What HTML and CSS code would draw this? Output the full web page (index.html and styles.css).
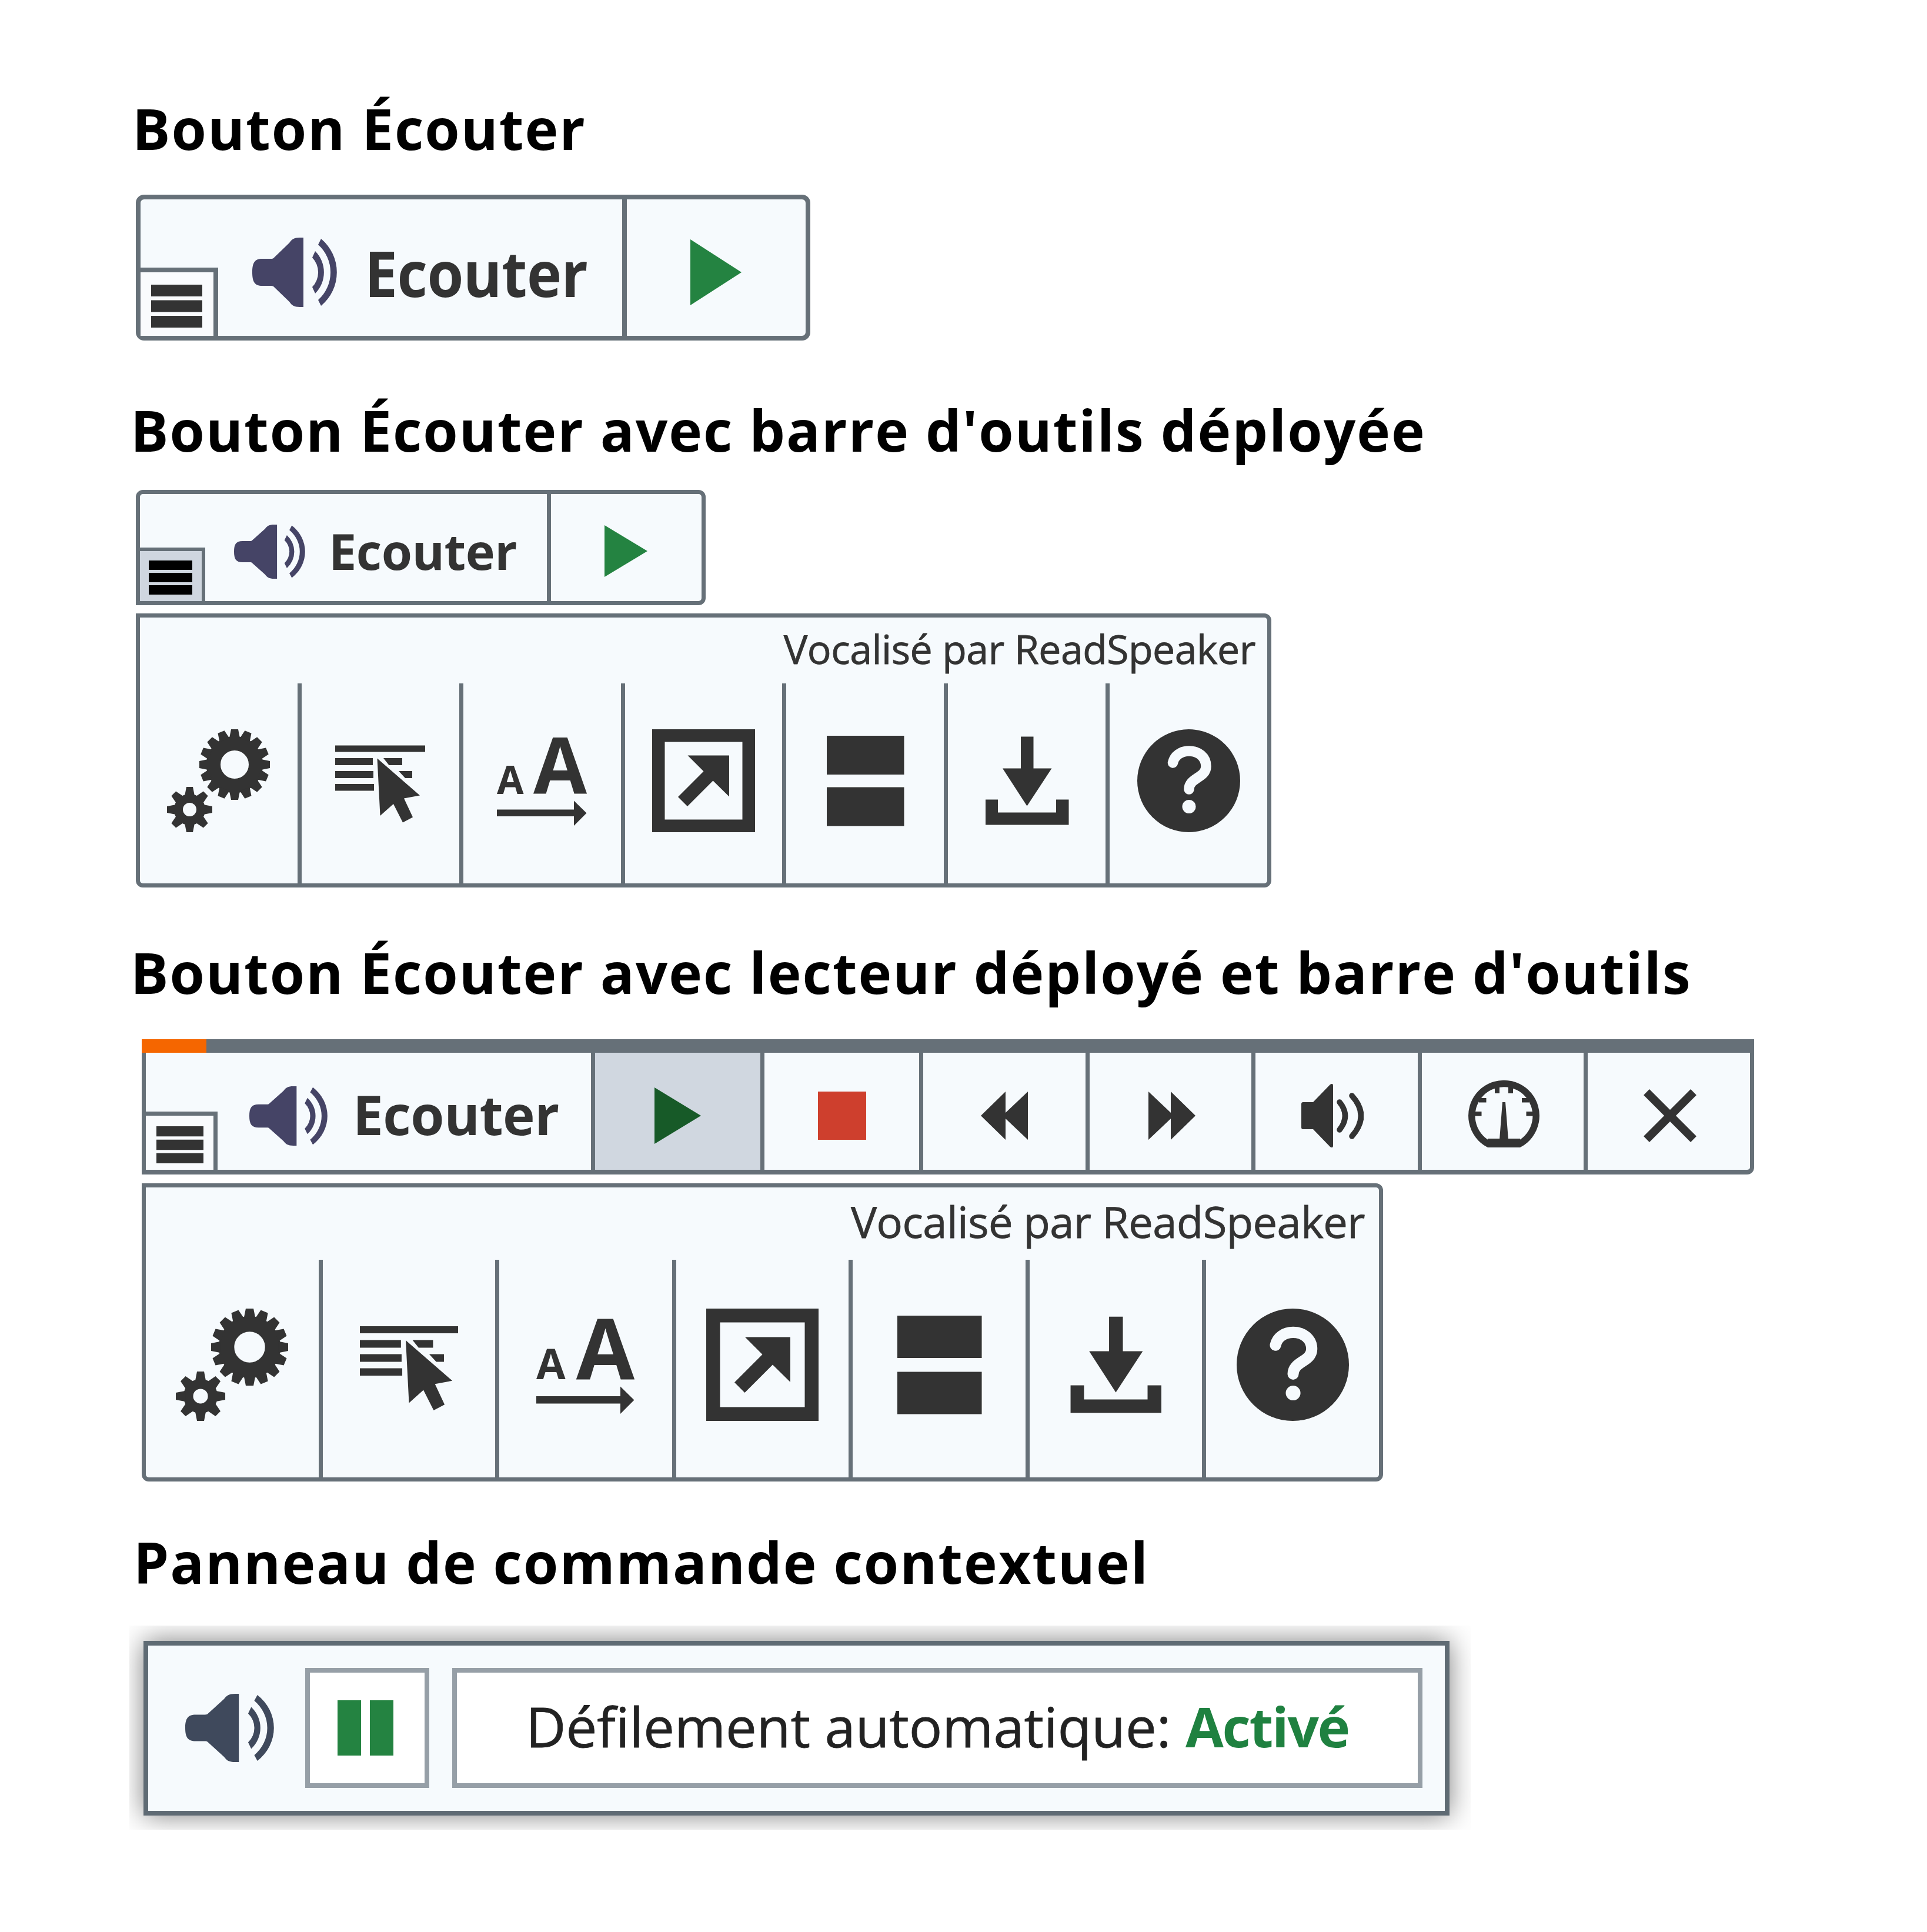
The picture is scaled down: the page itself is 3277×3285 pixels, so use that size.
FILE: index.html
```
<!DOCTYPE html>
<html lang="fr">
<head>
  <meta charset="UTF-8">
  <title>Boutons ReadSpeaker</title>
  <link rel="stylesheet" href="styles.css">
</head>
<body>

<!-- icons -->
<svg class="sprite" width="0" height="0">
  <symbol id="speaker" viewBox="0 0 144 118" preserveAspectRatio="none">
    <path d="M87 0H81C71 0 67 3 63 9L36 35C35 36 33 36 30 36H17C4 36 0 43 0 59S4 82 17 82H30C33 82 35 82 36 83L63 109C67 115 71 118 81 118H87Z"/>
    <path d="M107 23A51 51 0 0 1 107 95L102 84A36 36 0 0 0 102 34Z"/>
    <path d="M117 2A74 74 0 0 1 117 116L112 106A63 63 0 0 0 112 12Z"/>
  </symbol>
  <symbol id="menu" viewBox="0 0 86 73" preserveAspectRatio="none">
    <path d="M0 0H86V20H0ZM0 26.5H86V46.5H0ZM0 53H86V73H0Z"/>
  </symbol>
  <symbol id="play" viewBox="0 0 87 112" preserveAspectRatio="none">
    <path d="M0 0L87 56L0 112Z"/>
  </symbol>
  <symbol id="rewind" viewBox="0 0 80 82">
    <path d="M0 41L42 0V36L80 0V82L42 46V82Z"/>
  </symbol>
  <symbol id="volume" viewBox="0 0 106 108">
    <path d="M3 31H20L49 1Q54 -2 54 3V105Q54 110 49 107L20 77H3Q0 77 0 74V34Q0 31 3 31Z"/>
    <path class="line" stroke-width="9.5" stroke-linecap="round" d="M65 31Q84 54 65 78M86 20Q117 54 86 89"/>
  </symbol>
  <symbol id="gauge" viewBox="0 0 121 115">
    <path class="line" stroke-width="11.5" d="M34 109A54.7 54.7 0 1 1 87 109Z"/>
    <path d="M33 100H88V115H33ZM45 8H53V23H45ZM68 8H76V23H68ZM18 31H30.5V38.5H18ZM91 31H103V38.5H91ZM8 54H22.5V61.5H8ZM98.5 54H113V61.5H98.5ZM58 38H63L68 102H53Z"/>
  </symbol>
  <symbol id="close" viewBox="0 0 90 90">
    <path class="line" stroke-width="14" d="M5 5L85 85M85 5L5 85"/>
  </symbol>

  <path id="tooth" d="M-6 -60H6L9 -45H-9ZM-6 60H6L9 45H-9Z"/>
  <path id="tooth-s" d="M-5.5 -38.5H5.5L8.5 -23H-8.5ZM-5.5 38.5H5.5L8.5 23H-8.5Z"/>
  <symbol id="gears" viewBox="0 0 175 175">
    <g transform="translate(115 60)">
      <circle class="line" stroke-width="24" r="36"/>
      <use href="#tooth"/>
      <use href="#tooth" transform="rotate(22.5)"/>
      <use href="#tooth" transform="rotate(45)"/>
      <use href="#tooth" transform="rotate(67.5)"/>
      <use href="#tooth" transform="rotate(90)"/>
      <use href="#tooth" transform="rotate(112.5)"/>
      <use href="#tooth" transform="rotate(135)"/>
      <use href="#tooth" transform="rotate(157.5)"/>
    </g>
    <g transform="translate(38.5 136.5)">
      <circle class="line" stroke-width="15" r="19"/>
      <use href="#tooth-s"/>
      <use href="#tooth-s" transform="rotate(45)"/>
      <use href="#tooth-s" transform="rotate(90)"/>
      <use href="#tooth-s" transform="rotate(135)"/>
    </g>
  </symbol>
  <symbol id="select" viewBox="0 0 175 175">
    <path d="M11 27.5H164V38.5H11ZM11 49H75V61H11ZM93 49H125V61H102.5ZM11 71H76V83H11ZM119 71H142V83H130ZM11 93H77V104.5H11Z"/>
    <path d="M82.5 49.5L155 112.5L128 117.5L143 149.5L126 158.5L110 127L87.5 147Z"/>
  </symbol>
  <symbol id="textsize" viewBox="0 0 175 175">
    <text x="11" y="110" font-size="66">A</text>
    <text x="73" y="110" font-size="132">A</text>
    <path d="M11 136.5H142V121.5L163.5 142.5L142 164V148H11Z"/>
  </symbol>
  <symbol id="enlarge" viewBox="0 0 175 175">
    <path class="line" stroke-width="21.5" d="M10.75 10.75H164.25V164.25H10.75Z"/>
    <path d="M60.5 44.5H131V114.5L103.5 87.5L60 131L44 115L87.5 71.5Z"/>
  </symbol>
  <symbol id="mask" viewBox="0 0 175 175">
    <path d="M22 11H153.5V77H22ZM22 98.5H153.5V164.5H22Z"/>
  </symbol>
  <symbol id="download" viewBox="0 0 175 175">
    <path d="M77 12.5H98.5V66.5H129.5L87.5 130.5L46 66.5H77ZM17 119.5H38V141.5H137V119.5H158.5V162.5H17Z"/>
  </symbol>
  <symbol id="help" viewBox="0 0 175 175">
    <circle cx="87.5" cy="87.5" r="87.5"/>
    <path class="mark" d="M60.5 57C63 45 74 37 88 37C104 37 117 47 117 63C117 83 88 82 88 102"/>
    <circle class="dot" cx="88" cy="131.5" r="11.5"/>
  </symbol>
</svg>

<h2>Bouton Écouter</h2>
<div class="player large">
  <div class="listen">
    <svg class="speaker"><use href="#speaker"/></svg>
    <span class="label">Ecouter</span>
    <div class="menu"><svg><use href="#menu"/></svg></div>
  </div>
  <div class="btn play"><svg><use href="#play"/></svg></div>
</div>

<h2 class="second">Bouton Écouter avec barre d'outils déployée</h2>
<div class="player small">
  <div class="listen">
    <svg class="speaker"><use href="#speaker"/></svg>
    <span class="label">Ecouter</span>
    <div class="menu active"><svg><use href="#menu"/></svg></div>
  </div>
  <div class="btn play"><svg><use href="#play"/></svg></div>
</div>
<div class="toolbar">
  <div class="powered"><span>Vocalisé par ReadSpeaker</span></div>
  <div class="tools">
    <div class="tool"><svg><use href="#gears"/></svg></div>
    <div class="tool"><svg><use href="#select"/></svg></div>
    <div class="tool"><svg><use href="#textsize"/></svg></div>
    <div class="tool"><svg><use href="#enlarge"/></svg></div>
    <div class="tool"><svg><use href="#mask"/></svg></div>
    <div class="tool"><svg><use href="#download"/></svg></div>
    <div class="tool"><svg><use href="#help"/></svg></div>
  </div>
</div>

<h2 class="third">Bouton Écouter avec lecteur déployé et barre d'outils</h2>
<div class="player wide">
  <div class="progress"><div class="bar"></div></div>
  <div class="controls">
    <div class="listen">
      <svg class="speaker"><use href="#speaker"/></svg>
      <span class="label">Ecouter</span>
      <div class="menu"><svg><use href="#menu"/></svg></div>
    </div>
    <div class="btn play active"><svg><use href="#play"/></svg></div>
    <div class="btn stop"><div class="square"></div></div>
    <div class="btn"><svg class="skip"><use href="#rewind"/></svg></div>
    <div class="btn"><svg class="skip forward"><use href="#rewind"/></svg></div>
    <div class="btn volume"><svg><use href="#volume"/></svg></div>
    <div class="btn gauge"><svg><use href="#gauge"/></svg></div>
    <div class="btn close"><svg><use href="#close"/></svg></div>
  </div>
</div>
<div class="toolbar big">
  <div class="powered"><span>Vocalisé par ReadSpeaker</span></div>
  <div class="tools">
    <div class="tool"><svg><use href="#gears"/></svg></div>
    <div class="tool"><svg><use href="#select"/></svg></div>
    <div class="tool"><svg><use href="#textsize"/></svg></div>
    <div class="tool"><svg><use href="#enlarge"/></svg></div>
    <div class="tool"><svg><use href="#mask"/></svg></div>
    <div class="tool"><svg><use href="#download"/></svg></div>
    <div class="tool"><svg><use href="#help"/></svg></div>
  </div>
</div>

<h2 class="fourth">Panneau de commande contextuel</h2>
<div class="popup-wrap">
  <div class="popup">
    <svg class="speaker"><use href="#speaker"/></svg>
    <div class="pause"><i></i><i></i></div>
    <div class="status"><span>Défilement automatique: <b>Activé</b></span></div>
  </div>
</div>

</body>
</html>
```
FILE: styles.css
```
body {
  background: #fff;
  font-family: "Open Sans", "Noto Sans", sans-serif;
  color: #333;
  margin: 0;
  padding: 152px 0 0 0;
}
* {
  box-sizing: border-box;
}
.sprite {
  position: absolute;
}
svg {
  display: block;
  fill: currentColor;
}
.line {
  fill: none;
  stroke: currentColor;
}
text {
  font-weight: bold;
}

h2 {
  font-size: 96px;
  line-height: 132px;
  letter-spacing: 2px;
  white-space: nowrap;
  color: #000;
  margin: 0 0 47px 225px;
}
h2.second {
  margin: 86px 0 36px 222px;
}
h2.third {
  margin: 78px 0 48px 222px;
}
h2.fourth {
  margin: 71px 0 42px 227px;
}

/* player */
.player {
  display: flex;
  margin-left: 231px;
  background: #f6fafd;
  border: 8px solid #667078;
  border-radius: 14px;
}
.player.large {
  width: 1147px;
  height: 248px;
}
.player.small {
  width: 969px;
  height: 196px;
  border-width: 7px;
  border-radius: 12px 12px 12px 0;
}
.listen {
  position: relative;
  display: flex;
  align-items: center;
}
.large .listen {
  width: 819px;
  padding: 16px 0 0 190px;
}
.small .listen {
  width: 692px;
  padding: 13px 0 0 160px;
}
.speaker {
  color: #454466;
}
.large .speaker {
  width: 144px;
  height: 118px;
}
.small .speaker {
  width: 121px;
  height: 92px;
}
.label {
  font-weight: bold;
  line-height: 1;
  letter-spacing: -0.5px;
}
.large .label {
  font-size: 100px;
  margin-left: 47px;
  transform: scaleY(1.07);
}
.small .label {
  font-size: 84.5px;
  margin-left: 40px;
}
.menu {
  position: absolute;
  left: 0;
  bottom: 0;
  background: #f9fbfd;
  border: solid #667078;
  border-width: 8px 8px 0 0;
}
.large .menu {
  width: 132px;
  height: 116px;
  padding: 21px 0 0 18px;
}
.large .menu svg {
  width: 87px;
  height: 73px;
}
.small .menu {
  width: 111px;
  height: 91px;
  border-width: 6px 6px 0 0;
  padding: 16px 0 0 15px;
}
.small .menu svg {
  width: 74px;
  height: 58px;
}
.menu.active {
  background: #cfd6df;
  color: #000;
}
.btn {
  flex: 1;
  display: flex;
  align-items: center;
  justify-content: center;
  border-left: 8px solid #667078;
  padding-top: 16px;
}
.small .btn {
  border-left-width: 7px;
  padding-top: 12px;
  padding-right: 2px;
}
.play {
  color: #248341;
}
.large .play svg {
  width: 87px;
  height: 112px;
  margin-right: 2px;
}
.small .play svg {
  width: 73px;
  height: 88px;
}

/* wide player */
.player.wide {
  display: block;
  width: 2742px;
  height: 230px;
  margin-left: 241px;
  border-width: 0 7px 8px;
  border-radius: 0 0 12px 0;
}
.progress {
  height: 23px;
  margin: 0 -7px;
  background: #667078;
}
.bar {
  width: 110px;
  height: 23px;
  background: #f56600;
}
.controls {
  display: flex;
  height: 199px;
}
.wide .listen {
  width: 757px;
  padding: 15px 0 0 176px;
}
.wide .speaker {
  width: 133px;
  height: 101px;
}
.wide .label {
  font-size: 92.5px;
  margin: -5px 0 0 43px;
}
.wide .menu {
  width: 122px;
  height: 99px;
  border-width: 7px 7px 0 0;
  padding: 18px 0 0 18px;
}
.wide .menu svg {
  width: 80px;
  height: 63px;
}
.wide .btn {
  border-left-width: 7px;
  padding-top: 15px;
}
.wide .play {
  flex: none;
  width: 288px;
  background: #d0d7e0;
  color: #175a28;
}
.wide .play svg {
  width: 79px;
  height: 96px;
}
.wide .stop {
  flex: none;
  width: 270px;
}
.square {
  width: 82px;
  height: 82px;
  background: #ce3f2d;
}
.skip {
  width: 80px;
  height: 82px;
}
.forward {
  transform: scaleX(-1);
  margin-left: 6px;
}
.volume svg {
  width: 106px;
  height: 108px;
  margin-right: 14px;
}
.gauge svg {
  width: 121px;
  height: 115px;
  margin: -7px 0 0 3px;
}
.wide .close svg {
  width: 90px;
  height: 90px;
  margin-left: 3px;
}

/* toolbar */
.toolbar {
  width: 1931px;
  height: 466px;
  margin: 14px 0 0 231px;
  background: #f6fafd;
  border: 7px solid #667078;
  border-radius: 0 12px 12px 12px;
}
.powered {
  height: 112px;
  padding: 6px 20px 0 0;
  text-align: right;
  font-size: 68px;
  line-height: 94px;
  letter-spacing: -0.55px;
  -webkit-text-stroke: 0.8px #333;
}
.tools {
  display: flex;
  height: 340px;
}
.tool {
  flex: 1;
  display: flex;
  justify-content: center;
  padding-top: 78px;
}
.tool + .tool {
  border-left: 7px solid #667078;
}
.tool svg {
  width: 175px;
  height: 175px;
}
.mark {
  fill: none;
  stroke: #f6fafd;
  stroke-width: 17.5;
  stroke-linecap: round;
}
.dot {
  fill: #f6fafd;
}
.toolbar.big {
  width: 2111px;
  height: 507px;
  margin: 15px 0 0 241px;
}
.big .powered {
  height: 123px;
  font-size: 74px;
  padding: 6px 24px 0 0;
  line-height: 104px;
}
.big .tools {
  height: 370px;
}
.big .tool {
  padding-top: 83px;
}
.big .tool svg {
  width: 191px;
  height: 191px;
}

/* popup */
.popup-wrap {
  width: 2281px;
  height: 347px;
  margin-left: 220px;
  padding: 26px 0 0 24px;
  overflow: hidden;
}
.popup {
  display: flex;
  align-items: center;
  width: 2221px;
  height: 297px;
  padding: 0 0 1px 63px;
  background: #f6fafd;
  border: 8px solid #5f6b74;
  box-shadow: 0 0 44px rgba(0, 0, 0, 0.5);
}
.popup .speaker {
  width: 151px;
  height: 116px;
  color: #3f495c;
}
.pause, .status {
  display: flex;
  align-items: center;
  justify-content: center;
  height: 204px;
  background: #fff;
  border: 8px solid #969fa7;
}
.pause {
  width: 211px;
  gap: 15px;
  margin: 0 39px 0 53px;
  padding-right: 6px;
}
.pause i {
  width: 40px;
  height: 94px;
  background: #248341;
}
.status {
  width: 1650px;
  padding-bottom: 6px;
  font-size: 94px;
  color: #222;
  -webkit-text-stroke: 0.8px;
}
.status b {
  color: #1f8140;
  letter-spacing: -2.3px;
  -webkit-text-stroke: 0;
}
```
